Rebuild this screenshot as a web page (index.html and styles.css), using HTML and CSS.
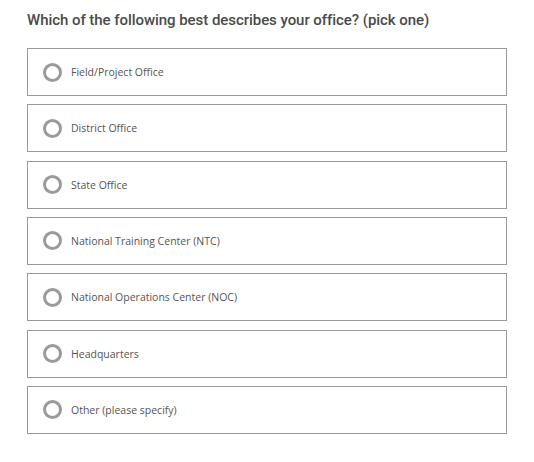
FILE: index.html
```html
<!DOCTYPE html>
<html>
<head>
<meta charset="utf-8">
<link rel="stylesheet" href="styles.css">
</head>
<body>
<div class="question">
  <h2 class="title">Which of the following best describes your office? (pick one)</h2>
  <div class="options">
    <label class="option"><span class="radio"></span><span class="label">Field/Project Office</span></label>
    <label class="option"><span class="radio"></span><span class="label">District Office</span></label>
    <label class="option"><span class="radio"></span><span class="label">State Office</span></label>
    <label class="option"><span class="radio"></span><span class="label">National Training Center (NTC)</span></label>
    <label class="option"><span class="radio"></span><span class="label">National Operations Center (NOC)</span></label>
    <label class="option"><span class="radio"></span><span class="label">Headquarters</span></label>
    <label class="option"><span class="radio"></span><span class="label">Other (please specify)</span></label>
  </div>
</div>
</body>
</html>
```
FILE: styles.css
```css
html, body {
  margin: 0;
  padding: 0;
  background: #fff;
}
body {
  font-family: "Lato", "Open Sans", sans-serif;
}
.question {
  padding: 11px 0 0 27px;
  width: 480px;
}
.title {
  margin: 0 0 19px 0;
  font-family: "Roboto", sans-serif;
  font-size: 15px;
  font-weight: 500;
  color: #4a4a4a;
  line-height: 18px;
  letter-spacing: -0.05px;
}
.options {
  display: flex;
  flex-direction: column;
  gap: 8.33px;
}
.option {
  display: flex;
  align-items: center;
  height: 46px;
  border: 1px solid #999;
  padding-left: 15px;
  box-sizing: content-box;
}
.radio {
  width: 13px;
  height: 13px;
  border: 3px solid #9a9a9a;
  border-radius: 50%;
  flex: none;
}
.label {
  margin-left: 9px;
  font-family: "Open Sans", sans-serif;
  font-size: 10.5px;
  color: #555;
}
```
